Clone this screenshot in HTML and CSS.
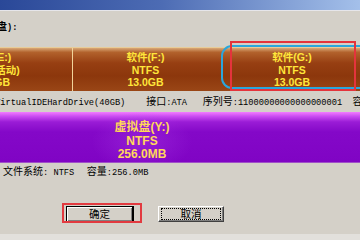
FILE: index.html
```html
<!DOCTYPE html>
<html lang="zh-CN">
<head>
  <meta charset="UTF-8"/>
  <title>磁盘分区</title>
  <link rel="stylesheet" href="styles.css">
</head>
<body>
  <div class="titlebar"></div>
  <div class="caption"><span class="zh">磁盘</span><span class="m">):</span></div>

  <div class="disk brown">
    <div class="part part-e">系统(E:)<br>NTFS(活动)<br>13.0GB</div>
    <div class="part part-f">软件(F:)<br>NTFS<br>13.0GB</div>
    <div class="part part-g">软件(G:)<br>NTFS<br>13.0GB</div>
    <div class="mark-blue"></div>
    <div class="mark-red"></div>
  </div>

  <div class="info disk-info">
    <span class="m">VirtualIDEHardDrive(40GB)    </span><span class="zh">接口</span><span class="m">:ATA   </span><span class="zh">序列号</span><span class="m">:11000000000000000001  </span><span class="zh">容量</span>
  </div>

  <div class="disk purple">
    <div class="part part-y">虚拟盘(Y:)<br>NTFS<br>256.0MB</div>
  </div>

  <div class="info fs-info">
    <span class="zh">文件系统</span><span class="m">: NTFS  </span><span class="zh gap">容量</span><span class="m">:256.0MB</span>
  </div>

  <div class="buttons">
    <div class="hl">
      <button class="btn btn-ok">确定</button>
    </div>
    <button class="btn btn-cancel"><span class="focus">取消</span></button>
  </div>
  <div class="footer"></div>
</body>
</html>
```

FILE: styles.css
```css
body {
  margin: 0;
  width: 360px;
  height: 240px;
  overflow: hidden;
  background: #d4d0c8;
  color: #000;
  font-family: "Liberation Mono", "Noto Sans CJK SC", monospace;
}
.titlebar {
  height: 10px;
  background: linear-gradient(90deg, #2a4898 0%, #4d6cb4 45%, #a4c0ea 100%);
  border-bottom: 1px solid #e6e6ea;
}
.zh {
  font-family: "Noto Sans CJK SC", sans-serif;
  font-size: 10px;
}
.m {
  font-family: "Liberation Mono", monospace;
  font-size: 8.7px;
  white-space: pre;
}
.caption {
  height: 30px;
  padding-top: 8px;
  box-sizing: border-box;
  margin-left: -13px;
  line-height: 14px;
  font-weight: bold;
}

/* partition bands */
.disk {
  position: relative;
  display: flex;
  overflow: visible;
}
.brown {
  margin-top: 6px;
  height: 43px;
  background: linear-gradient(180deg, #d9a878 0%, #b2622c 10%, #973f12 35%, #8c370c 65%, #9a4616 100%);
  border-top: 1px solid #e8cc98;
}
.part {
  flex: none;
  text-align: center;
  color: #ffe63a;
  font-family: "Liberation Sans", "Noto Sans CJK SC", sans-serif;
  font-weight: bold;
}
.brown .part {
  font-size: 10.5px;
  line-height: 12.5px;
  padding-top: 3px;
}
.part-e {
  width: 160px;
  margin-left: -88px;
  border-right: 1px solid #f2d49a;
}
.part-f { width: 145px; }
.part-g { width: 148px; }
.mark-blue {
  position: absolute;
  left: 221px;
  top: -3px;
  width: 160px;
  height: 40px;
  border: 2px solid #2aa6dc;
  border-radius: 11px;
}
.mark-red {
  position: absolute;
  left: 230px;
  top: -7px;
  width: 122px;
  height: 46px;
  border: 2px solid #e4343c;
}

.info {
  white-space: nowrap;
  line-height: 14px;
}
.disk-info {
  height: 21px;
  padding-top: 3px;
  box-sizing: border-box;
  margin-left: -5px;
}
.purple {
  height: 50px;
  background: linear-gradient(180deg, #f27cff 0%, #c84af0 9%, #9a1cd6 20%, #8408c8 40%, #8004c4 100%);
  border-bottom: 1px solid #a050c8;
}
.part-y {
  width: 284px;
  font-size: 12px;
  line-height: 13.5px;
  padding-top: 9px;
  color: #ffd85a;
  background: radial-gradient(ellipse 50px 30px at 142px 30px, rgba(170, 60, 230, 0.45), transparent);
}
.fs-info {
  height: 20px;
  padding: 1px 0 0 3px;
  box-sizing: border-box;
}
.fs-info .gap { margin-left: 2px; }

/* dialog buttons */
.buttons {
  display: flex;
  align-items: center;
  margin-top: 23px;
  padding-left: 66px;
  height: 16px;
}
.hl {
  position: relative;
}
.hl::after {
  content: "";
  position: absolute;
  left: -4px;
  top: -3px;
  width: 76px;
  height: 16px;
  border: 2px solid #e23a40;
}
.btn {
  display: block;
  height: 16px;
  padding: 0;
  background: #d4d0c8;
  font-family: "Noto Sans CJK SC", sans-serif;
  font-size: 10.5px;
  line-height: 12px;
  color: #000;
  border: 1px solid;
  border-color: #fff #404040 #404040 #fff;
  box-shadow: inset -1px -1px #808080;
}
.btn-ok {
  width: 68px;
  border: 1px solid #000;
  border-right-width: 2px;
  box-shadow: inset 1px 1px #fff, inset -1px -1px #808080;
}
.btn-cancel {
  width: 66px;
  margin-left: 24px;
}
.focus {
  display: block;
  margin: 1px 2px;
  border: 1px dotted #000;
  line-height: 10px;
}
.footer {
  margin-top: 12px;
  height: 12px;
  background: #e2e0dc;
}
```
